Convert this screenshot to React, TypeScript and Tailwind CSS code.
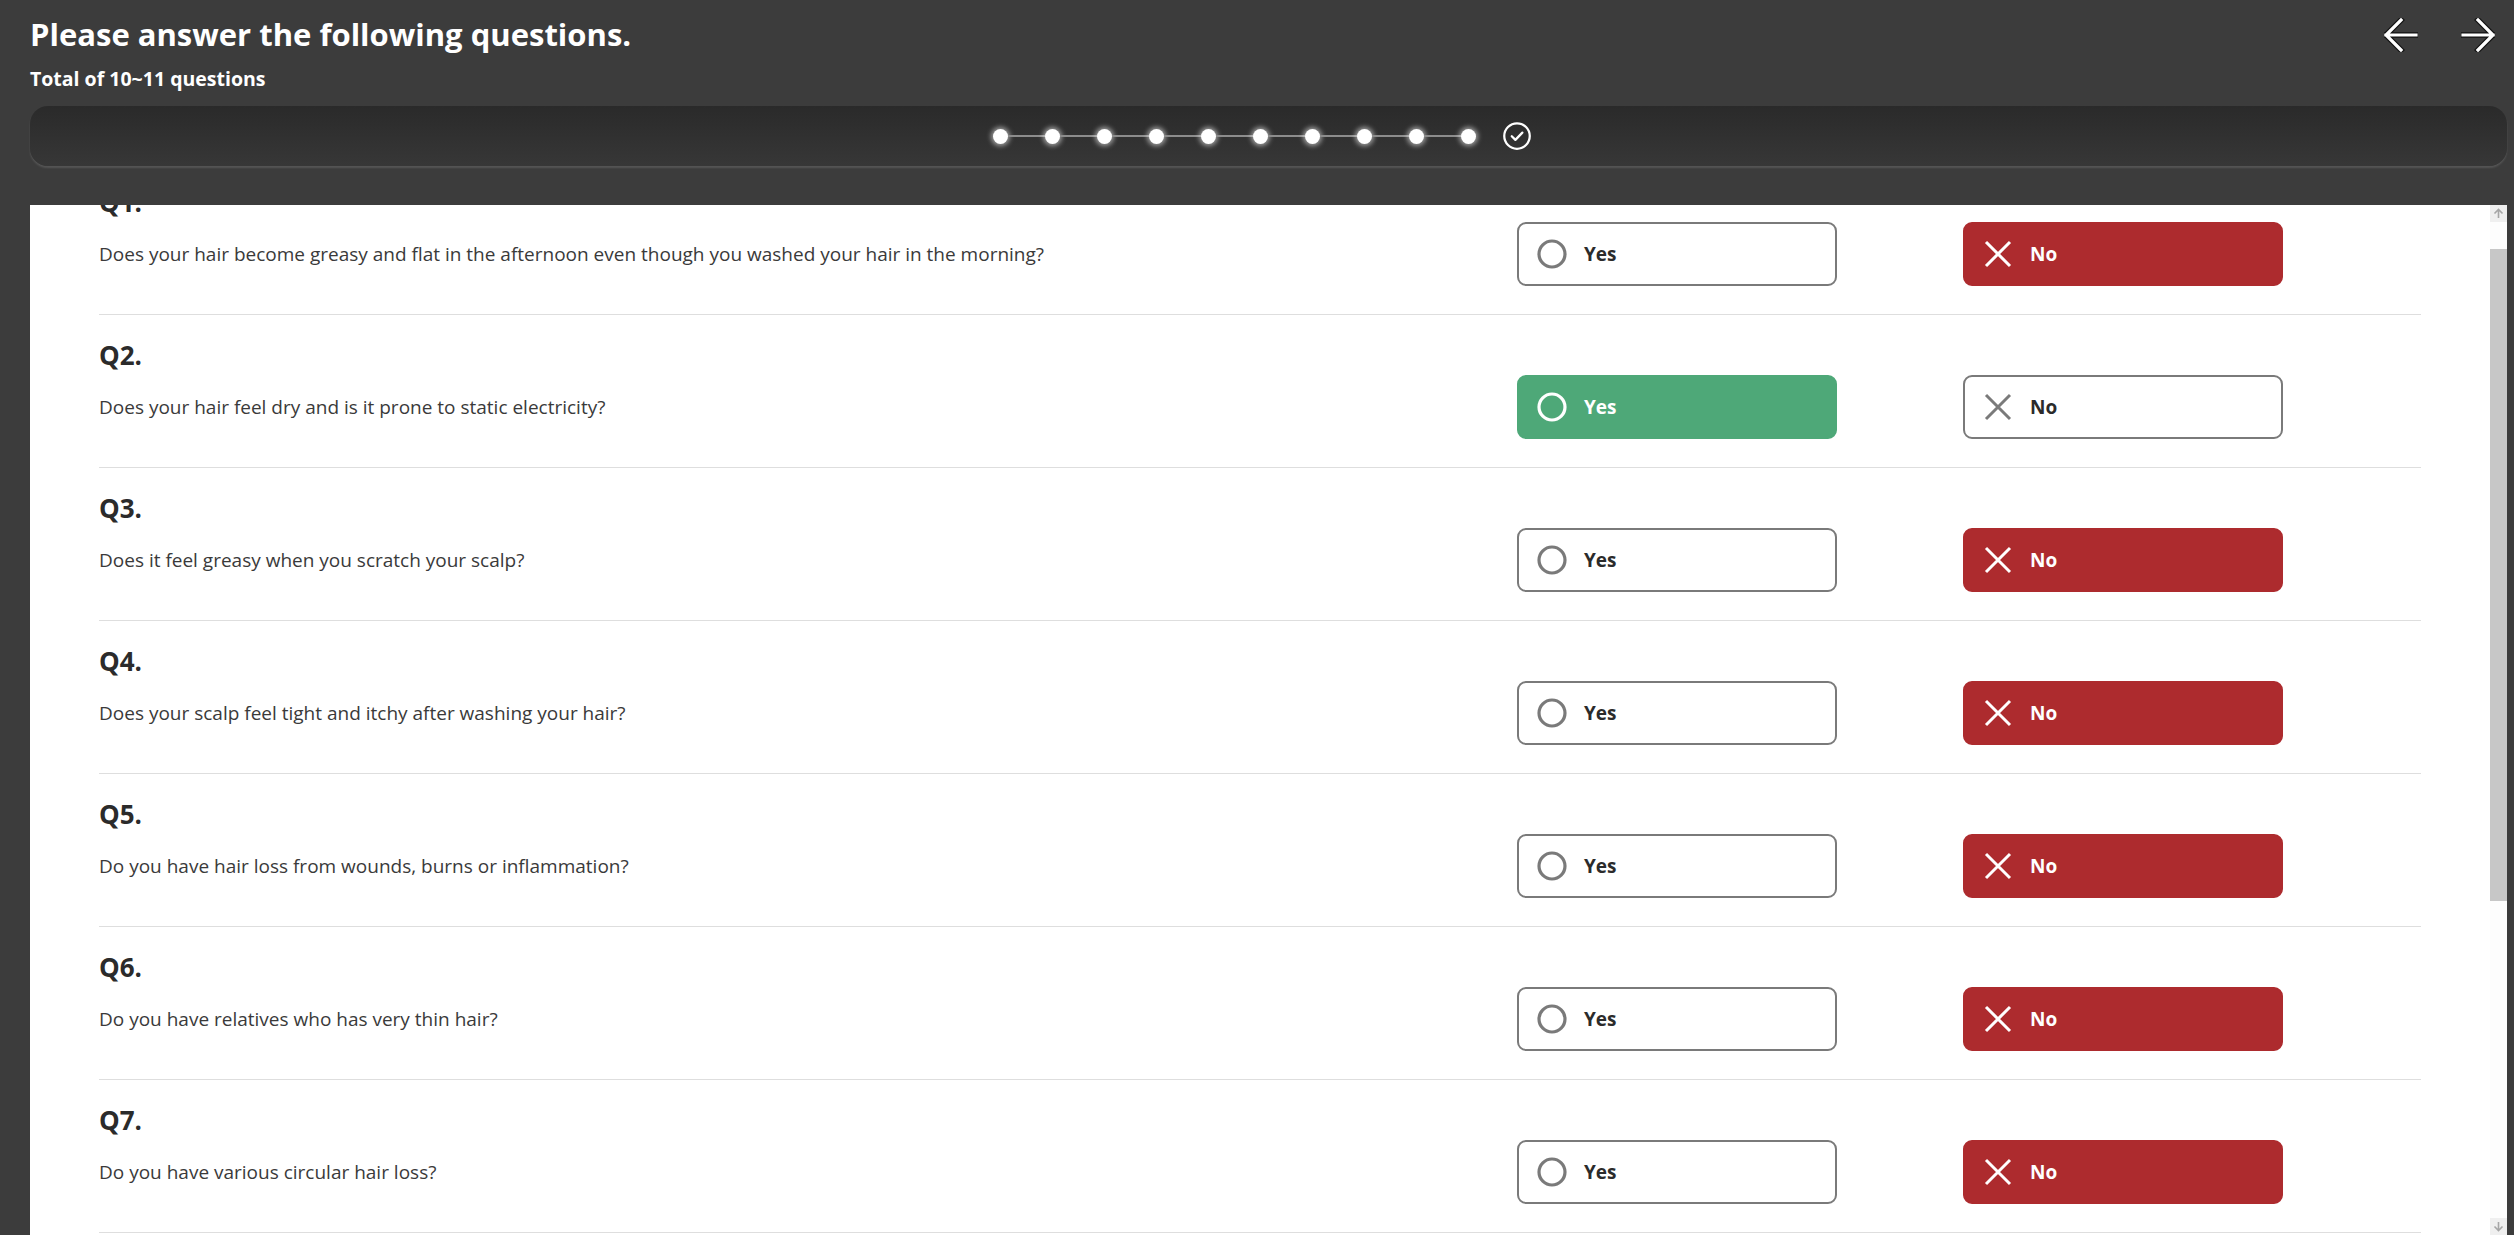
import { useLayoutEffect, useRef, useState } from "react";

type Answer = "yes" | "no" | null;

interface Question {
  id: number;
  text: string;
}

const QUESTIONS: Question[] = [
  { id: 1, text: "Does your hair become greasy and flat in the afternoon even though you washed your hair in the morning?" },
  { id: 2, text: "Does your hair feel dry and is it prone to static electricity?" },
  { id: 3, text: "Does it feel greasy when you scratch your scalp?" },
  { id: 4, text: "Does your scalp feel tight and itchy after washing your hair?" },
  { id: 5, text: "Do you have hair loss from wounds, burns or inflammation?" },
  { id: 6, text: "Do you have relatives who has very thin hair?" },
  { id: 7, text: "Do you have various circular hair loss?" },
  { id: 8, text: "Do you lose more than 100 hairs a day?" },
  { id: 9, text: "Has your hair become thinner and softer than before?" },
  { id: 10, text: "Do you often feel stressed or sleep less than six hours?" },
];

const INITIAL: Record<number, Answer> = {
  1: "no",
  2: "yes",
  3: "no",
  4: "no",
  5: "no",
  6: "no",
  7: "no",
  8: null,
  9: null,
  10: null,
};

const FONT = "font-['Open_Sans','Noto_Sans',sans-serif]";
const BTN = 17; // scrollbar arrow button size

function NavArrow({ dir }: { dir: "left" | "right" }) {
  const d = dir === "left" ? "M17 2 L2 17 L17 32 M2 17 H32" : "M17 2 L32 17 L17 32 M32 17 H2";
  return (
    <svg width="34" height="34" viewBox="0 0 34 34" fill="none" strokeLinecap="square">
      <path d={d} stroke="#111" strokeWidth="5.6" />
      <path d={d} stroke="#fff" strokeWidth="3.2" />
    </svg>
  );
}

function Progress({ total }: { total: number }) {
  return (
    <div className="flex h-[60px] items-center justify-center rounded-[18px] bg-linear-to-b from-[#2a2a2a] to-[#373737] shadow-[0_2px_2px_rgba(255,255,255,0.13)]">
      <div className="flex items-center pr-[12px]">
        {Array.from({ length: total }).map((_, i) => (
          <div key={i} className="flex items-center">
            {i > 0 && <div className="h-[2px] w-[37px] bg-[#8c8c8c]" />}
            <div className="h-[15px] w-[15px] rounded-full bg-white shadow-[0_0_5px_2px_rgba(255,255,255,0.55)]" />
          </div>
        ))}
        <svg
          className="ml-[26px]"
          width="30"
          height="30"
          viewBox="0 0 24 24"
          fill="none"
          stroke="#fff"
          strokeWidth="1.8"
          strokeLinecap="round"
          strokeLinejoin="round"
        >
          <circle cx="12" cy="12" r="10.2" />
          <path d="m7.8 12.2 2.9 2.9 5.6-5.8" />
        </svg>
      </div>
    </div>
  );
}

function ChoiceButton({
  kind,
  active,
  onClick,
}: {
  kind: "yes" | "no";
  active: boolean;
  onClick: () => void;
}) {
  const activeBg = kind === "yes" ? "bg-[#4ea878] border-[#4ea878]" : "bg-[#ad2b2e] border-[#ad2b2e]";
  const iconColor = active ? "#fff" : "#7a7a7a";
  return (
    <button
      type="button"
      onClick={onClick}
      className={`flex h-[64px] w-[320px] items-center gap-[17px] rounded-[9px] border-2 pl-[18px] text-left ${
        active ? `${activeBg} text-white` : "border-[#7a7a7a] bg-white text-[#2b2b2b]"
      }`}
    >
      {kind === "yes" ? (
        <svg width="30" height="30" viewBox="0 0 30 30" fill="none">
          <circle cx="15" cy="15" r="13" stroke={iconColor} strokeWidth="3.2" />
        </svg>
      ) : (
        <svg width="30" height="30" viewBox="0 0 30 30" fill="none">
          <path d="M3 3 L27 27 M27 3 L3 27" stroke={iconColor} strokeWidth="3" />
        </svg>
      )}
      <span className="text-[19px] font-bold">{kind === "yes" ? "Yes" : "No"}</span>
    </button>
  );
}

function ScrollArrow({ up }: { up: boolean }) {
  return (
    <div className="flex h-[17px] w-[17px] items-center justify-center bg-[#efefef]">
      <svg width="11" height="11" viewBox="0 0 11 11" fill="none" stroke="#a6a6a6" strokeWidth="1.6">
        {up ? <path d="M5.5 10V1.5M1.5 5.5l4-4 4 4" /> : <path d="M5.5 1v8.5M1.5 5.5l4 4 4-4" />}
      </svg>
    </div>
  );
}

export default function App() {
  const [answers, setAnswers] = useState<Record<number, Answer>>(INITIAL);
  const [thumb, setThumb] = useState({ top: 0, size: 0 });
  const listRef = useRef<HTMLDivElement>(null);

  const syncThumb = () => {
    const el = listRef.current;
    if (!el) return;
    const track = el.clientHeight - BTN * 2;
    setThumb({
      top: (el.scrollTop / el.scrollHeight) * track,
      size: (el.clientHeight / el.scrollHeight) * track,
    });
  };

  useLayoutEffect(() => {
    if (listRef.current) listRef.current.scrollTop = 43;
    syncThumb();
  }, []);

  const pick = (id: number, value: Answer) => setAnswers((prev) => ({ ...prev, [id]: value }));

  return (
    <div className={`flex h-[1235px] flex-col bg-[#3c3c3c] pl-[30px] pr-[7px] ${FONT}`}>
      <header className="flex items-start justify-between pt-[12px]">
        <div>
          <h1 className="text-[31px] font-bold leading-[44px] text-white">Please answer the following questions.</h1>
          <p className="mt-[11px] text-[19.5px] font-bold leading-[24px] text-white">Total of 10~11 questions</p>
        </div>
        <div className="mr-[12px] mt-[6px] flex items-center gap-[43px]">
          <button type="button" aria-label="Previous">
            <NavArrow dir="left" />
          </button>
          <button type="button" aria-label="Next">
            <NavArrow dir="right" />
          </button>
        </div>
      </header>

      <div className="mt-[15px]">
        <Progress total={10} />
      </div>

      <div className="mt-[39px] flex min-h-0 flex-1 bg-white">
        <div
          ref={listRef}
          onScroll={syncThumb}
          className="min-h-0 flex-1 overflow-y-scroll px-[69px] pb-[45px] [scrollbar-width:none]"
        >
          {QUESTIONS.map((q) => (
            <section key={q.id} className="border-b border-[#dedede] pb-[28px] pt-[26px]">
              <h2 className="text-[26px] font-bold leading-[28px] text-[#2b2b2b]">Q{q.id}.</h2>
              <div className="mt-[6px] flex items-center">
                <p className="flex-1 text-[19px] text-[#3a3a3a]">{q.text}</p>
                <div className="mr-[138px] flex gap-[126px]">
                  <ChoiceButton kind="yes" active={answers[q.id] === "yes"} onClick={() => pick(q.id, "yes")} />
                  <ChoiceButton kind="no" active={answers[q.id] === "no"} onClick={() => pick(q.id, "no")} />
                </div>
              </div>
            </section>
          ))}
        </div>

        <div className="flex w-[17px] flex-col bg-[#fdfdfd]">
          <ScrollArrow up />
          <div className="relative flex-1">
            <div className="absolute inset-x-0 bg-[#c7c7c7]" style={{ top: thumb.top, height: thumb.size }} />
          </div>
          <ScrollArrow up={false} />
        </div>
      </div>
    </div>
  );
}
